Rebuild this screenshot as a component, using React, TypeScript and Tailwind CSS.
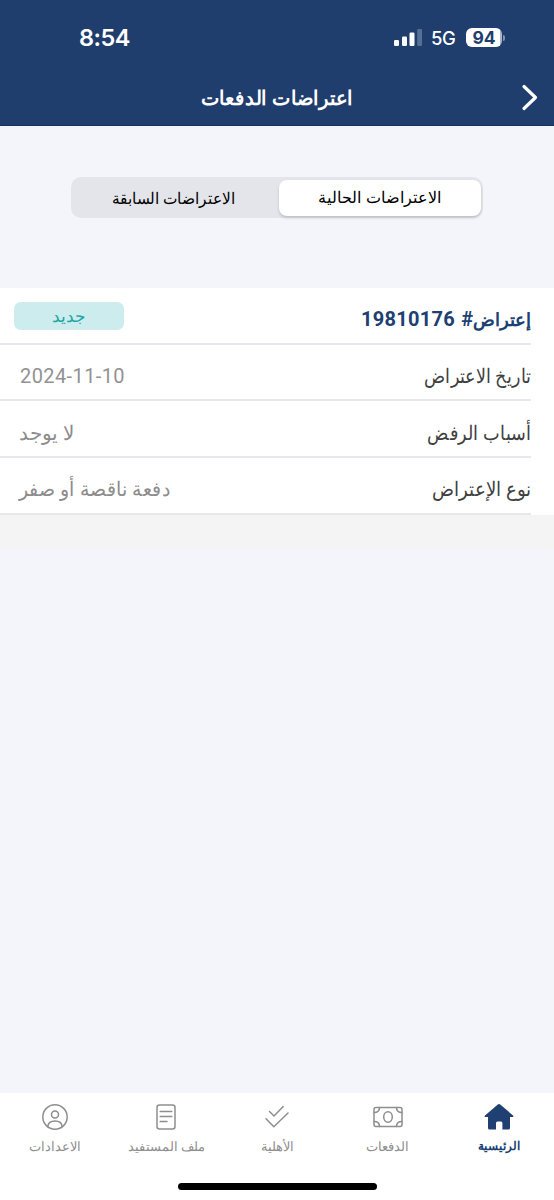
import type { ReactNode } from "react";

const latin = "font-[Inter,'Liberation_Sans',sans-serif]";
const arabic = "font-['Noto_Sans',sans-serif]";

function StatusBar() {
  return (
    <div dir="ltr" className={`flex h-[70px] items-start justify-between pl-[79px] pr-[48px] text-white ${latin}`}>
      <span className="mt-[21px] text-[23.5px] leading-[34px] font-semibold tracking-[-0.5px]">8:54</span>
      <div className="mt-[28px] flex items-start">
        <svg width="28" height="18" viewBox="0 0 28 18" className="mt-px">
          <rect x="0" y="11" width="5" height="6" rx="1.3" fill="#fff" />
          <rect x="8" y="7.5" width="5" height="9.5" rx="1.3" fill="#fff" />
          <rect x="15.5" y="3.5" width="5" height="13.5" rx="1.3" fill="#fff" />
          <rect x="23.2" y="0" width="4.8" height="17" rx="1.3" fill="#566f95" />
        </svg>
        <span className="ml-[9px] w-[27px] text-[18.5px] leading-[21px] font-medium tracking-[-0.4px]">5G</span>
        <div className="ml-[8px] flex h-[19px] w-[36px] items-center justify-center rounded-[6px] bg-[linear-gradient(90deg,#fff_94%,#a9b6ca_94%)] text-[17.5px] leading-none font-bold tracking-[-0.2px] text-[#1f3d6d]">
          94
        </div>
        <div className="mt-[7px] mr-px ml-px h-[6px] w-[2px] rounded-r-full bg-[#8193b0]" />
      </div>
    </div>
  );
}

function Row({ label, value }: { label: ReactNode; value: ReactNode }) {
  return (
    <div className="mr-[23px] flex h-[56.67px] items-center justify-between border-b-2 border-[#e7e8eb] pl-[19px]">
      {label}
      {value}
    </div>
  );
}

const labelClass = "block origin-right pt-[8px] text-[20px] leading-[30px] whitespace-nowrap text-[#404040]";
const valueClass = "block origin-left pt-[8px] text-[20px] leading-[30px] whitespace-nowrap text-[#8c8c8c]";

function Tab({ icon, text, className }: { icon: ReactNode; text: string; className: string }) {
  return (
    <div className={`flex w-[110.8px] flex-col items-center ${className}`}>
      <div className="flex h-[30px] items-center justify-center">{icon}</div>
      <span className="mt-[2px] leading-[24px] whitespace-nowrap">{text}</span>
    </div>
  );
}

const stroke = { fill: "none", stroke: "currentColor", strokeWidth: 1.5, strokeLinecap: "round", strokeLinejoin: "round" } as const;

export default function App() {
  return (
    <div dir="rtl" className={`flex h-[1200px] w-[554px] flex-col overflow-hidden bg-[#f4f5fa] ${arabic}`}>
      <header className="h-[126px] shrink-0 border-b border-[#18315c] bg-[#1f3d6d]">
        <StatusBar />
        <div className="flex h-[55px] items-center pr-[16px] text-white">
          <svg width="17" height="27" viewBox="0 0 17 27" fill="none" stroke="#fff" strokeWidth="3.2" strokeLinecap="round" strokeLinejoin="round">
            <path d="M3 2.5 14.5 13.5 3 24.5" />
          </svg>
          <h1 className="mr-[168px] origin-right scale-x-[0.975] text-[19.5px] leading-[30px] font-semibold whitespace-nowrap">اعتراضات الدفعات</h1>
        </div>
      </header>

      <div className="mt-[51px] mr-[71px] flex h-[41px] w-[412px] shrink-0 rounded-[10px] bg-[#e4e5ea] p-[2.5px] text-[16px] text-black">
        <div className="flex w-[202px] items-center justify-center rounded-[8px] bg-white pb-px font-medium shadow-[0_2px_3px_rgba(0,0,0,0.16)]">
          الاعتراضات الحالية
        </div>
        <div className="flex flex-1 items-center justify-center pr-[8px] pl-[2px] text-[16px] whitespace-nowrap">
          <span className="scale-x-[0.96]">الاعتراضات السابقة</span>
        </div>
      </div>

      <main className="mt-[70px] shrink-0 bg-white">
        <Row
          label={
            <div className="flex items-center gap-[6px] pt-[8px] text-[#203f72]">
              <span className="flex items-center text-[18.2px] leading-[30px] font-bold">
                إعتراض<span className="font-[Roboto,sans-serif] text-[20px]">#</span>
              </span>
              <span className="font-[Roboto,sans-serif] text-[20px] font-bold tracking-[0.3px]">19810176</span>
            </div>
          }
          value={
            <div className="mt-[2px] -ml-[5px] flex h-[28px] w-[110px] items-center justify-center rounded-[7px] bg-[#cdecee] pb-[2px] text-[17px] leading-none font-medium text-[#1fa7a3]">
              جديد
            </div>
          }
        />
        <Row
          label={<span className={`${labelClass} scale-x-[0.875]`}>تاريخ الاعتراض</span>}
          value={<span dir="ltr" className="ml-[1px] pt-[9px] font-[Roboto,sans-serif] text-[20px] tracking-[0.4px] text-[#929292]">2024-11-10</span>}
        />
        <Row
          label={<span className={`${labelClass} scale-x-[0.885]`}>أسباب الرفض</span>}
          value={<span className={valueClass}>لا يوجد</span>}
        />
        <Row
          label={<span className={`${labelClass} scale-x-[0.91]`}>نوع الإعتراض</span>}
          value={<span className={`${valueClass} scale-x-[0.947]`}>دفعة ناقصة أو صفر</span>}
        />
      </main>
      <div className="h-[33px] shrink-0 bg-[#f4f4f4]" />

      <footer className="mt-auto flex h-[107px] shrink-0 flex-col items-center bg-white">
        <nav className="flex h-[90px] w-full pt-[9px] text-[13px] text-[#8e8e8e]">
          <Tab
            className="text-[12.3px] font-semibold text-[#203f72]"
            text="الرئيسية"
            icon={
              <svg width="30" height="28" viewBox="0 0 30 28" fill="currentColor">
                <path d="M13.8 1.6Q15 .6 16.2 1.6L29 12.4Q29.8 13.2 29 14H26V25Q26 26.5 24.5 26.5H18.4V20Q18.4 18.5 17 18.5H13.5Q12 18.5 12 20V26.5H5.5Q4 26.5 4 25V14H1Q.2 13.2 1 12.4Z" />
              </svg>
            }
          />
          <Tab
            className=""
            text="الدفعات"
            icon={
              <svg width="30" height="22" viewBox="0 0 30 22" {...stroke}>
                <rect x="1" y="1.5" width="28" height="19" rx="2" />
                <ellipse cx="15" cy="11" rx="4.3" ry="5.2" />
                <path d="M6.5 1.5Q6.5 6.5 1 6.5M23.5 1.5Q23.5 6.5 29 6.5M1 15.5Q6.5 15.5 6.5 20.5M29 15.5Q23.5 15.5 23.5 20.5" />
              </svg>
            }
          />
          <Tab
            className=""
            text="الأهلية"
            icon={
              <svg width="24" height="24" viewBox="0 0 24 24" {...stroke}>
                <path d="M4.5 6.5 9 11 18.2 1.5M1 13.8 8.8 21.8 23 8" />
              </svg>
            }
          />
          <Tab
            className=""
            text="ملف المستفيد"
            icon={
              <svg width="20" height="26" viewBox="0 0 20 26" {...stroke}>
                <rect x="1" y="1" width="18" height="24" rx="2.5" />
                <path d="M4.2 7.5H15.8M4.2 12.5H15.8M4.2 17.5H11" />
              </svg>
            }
          />
          <Tab
            className=""
            text="الاعدادات"
            icon={
              <svg width="26" height="26" viewBox="0 0 26 26" {...stroke}>
                <circle cx="13" cy="13" r="12.2" />
                <circle cx="13" cy="10.5" r="3.5" />
                <path d="M5.8 22.5C6.2 18.7 9 17 13 17S19.8 18.7 20.2 22.5" />
              </svg>
            }
          />
        </nav>
        <div className="h-[7px] w-[199px] rounded-full bg-black" />
      </footer>
    </div>
  );
}
